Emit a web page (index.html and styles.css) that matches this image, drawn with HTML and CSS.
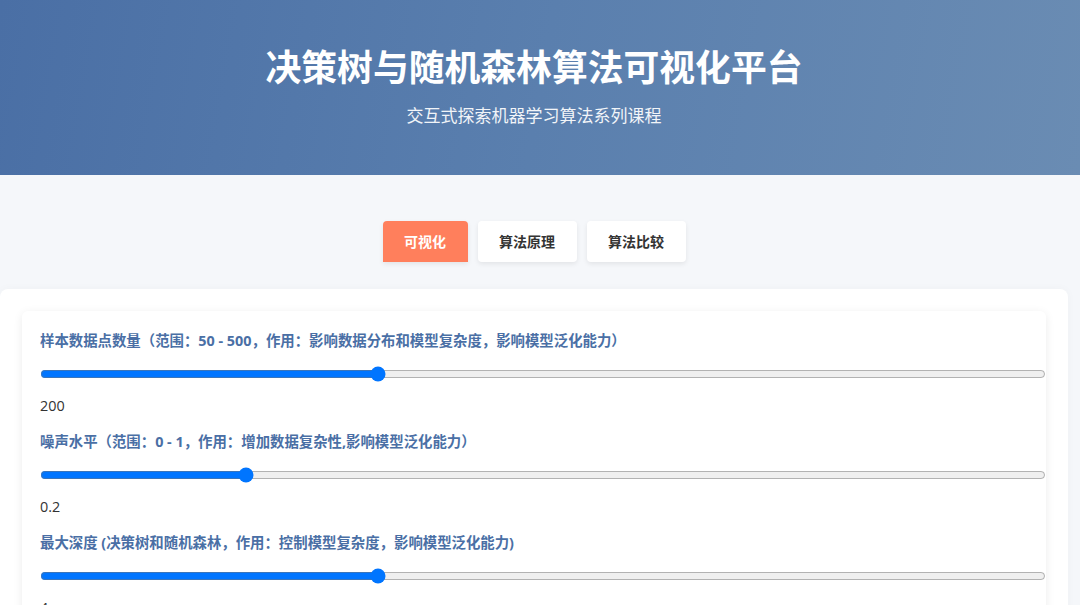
FILE: index.html
```html
<!DOCTYPE html>
<html lang="zh">

<head>
    <meta charset="utf-8">
    <title>决策树与随机森林算法可视化平台</title>
    <link rel="stylesheet" href="styles.css">
</head>

<body>
    <header class="header">
        <h1>决策树与随机森林算法可视化平台</h1>
        <p>交互式探索机器学习算法系列课程</p>
    </header>

    <nav class="tabs">
        <button class="tab active">可视化</button>
        <button class="tab">算法原理</button>
        <button class="tab">算法比较</button>
    </nav>

    <div class="container">
        <div class="controls">
            <div class="control_group">
                <label for="n_samples">样本数据点数量（范围：50 - 500，作用：影响数据分布和模型复杂度，影响模型泛化能力）</label>
                <input type="range" id="n_samples" min="50" max="500" value="200">
                <div class="value">200</div>
            </div>
            <div class="control_group">
                <label for="noise">噪声水平（范围：0 - 1，作用：增加数据复杂性,影响模型泛化能力）</label>
                <input type="range" id="noise" min="0" max="1" step="0.1" value="0.2">
                <div class="value">0.2</div>
            </div>
            <div class="control_group">
                <label for="max_depth">最大深度 (决策树和随机森林，作用：控制模型复杂度，影响模型泛化能力)</label>
                <input type="range" id="max_depth" min="1" max="10" value="4">
                <div class="value">4</div>
            </div>
        </div>
    </div>
</body>

</html>
```

FILE: styles.css
```css
    body {
        margin: 0;
        background: #f5f7fa;
        font-family: "Open Sans", "Noto Sans CJK SC", sans-serif;
        color: #333;
    }

    /* 顶部标题栏 */
    .header {
        height: 175px;
        box-sizing: border-box;
        padding: 42px 12px 0 0;
        text-align: center;
        color: #fff;
        background: linear-gradient(100deg, #4a6fa5 0%, #5a7fae 50%, #6a8cb3 100%);
    }

    .header h1 {
        margin: 0;
        font-size: 35.8px;
        line-height: 46px;
        font-weight: 700;
        font-family: "Noto Sans CJK SC", sans-serif;
    }

    .header p {
        margin: 15px 0 0;
        font-size: 17px;
        line-height: 24px;
        opacity: 0.92;
        font-family: "Noto Sans CJK SC", sans-serif;
    }

    /* 标签切换 */
    .tabs {
        display: flex;
        justify-content: center;
        gap: 10px;
        margin: 46px 0 27px;
        padding-right: 12px;
    }

    .tab {
        border: none;
        background: #fff;
        color: #333;
        font-family: "Noto Sans CJK SC", sans-serif;
        font-size: 14px;
        font-weight: 700;
        line-height: 21px;
        padding: 10px 21.5px;
        border-radius: 4px;
        box-shadow: 0 2px 5px rgba(0, 0, 0, 0.08);
    }

    .tab.active {
        background: #ff7f5c;
        color: #fff;
        border-radius: 4px 4px 0 0;
    }

    /* 主体 */
    .container {
        width: 1068px;
        box-sizing: border-box;
        background: #fff;
        border-radius: 8px;
        padding: 22px;
        min-height: 400px;
        box-shadow: 0 0 10px rgba(0, 0, 0, 0.03);
    }

    .controls {
        background: #fff;
        border-radius: 6px;
        padding: 20px 0 20px 18px;
        box-shadow: 0 2px 10px rgba(0, 0, 0, 0.08);
    }

    .control_group {
        margin-bottom: 16px;
    }

    .control_group label {
        display: block;
        font-size: 14.4px;
        line-height: 20px;
        font-weight: 700;
        color: #4a6fa5;
        margin-bottom: 15px;
    }

    .control_group input[type="range"] {
        display: block;
        width: 100%;
        height: 16px;
        margin: 2px 0;
    }

    .value {
        margin-top: 14px;
        font-size: 14.4px;
        line-height: 20px;
        color: #333;
    }
```
